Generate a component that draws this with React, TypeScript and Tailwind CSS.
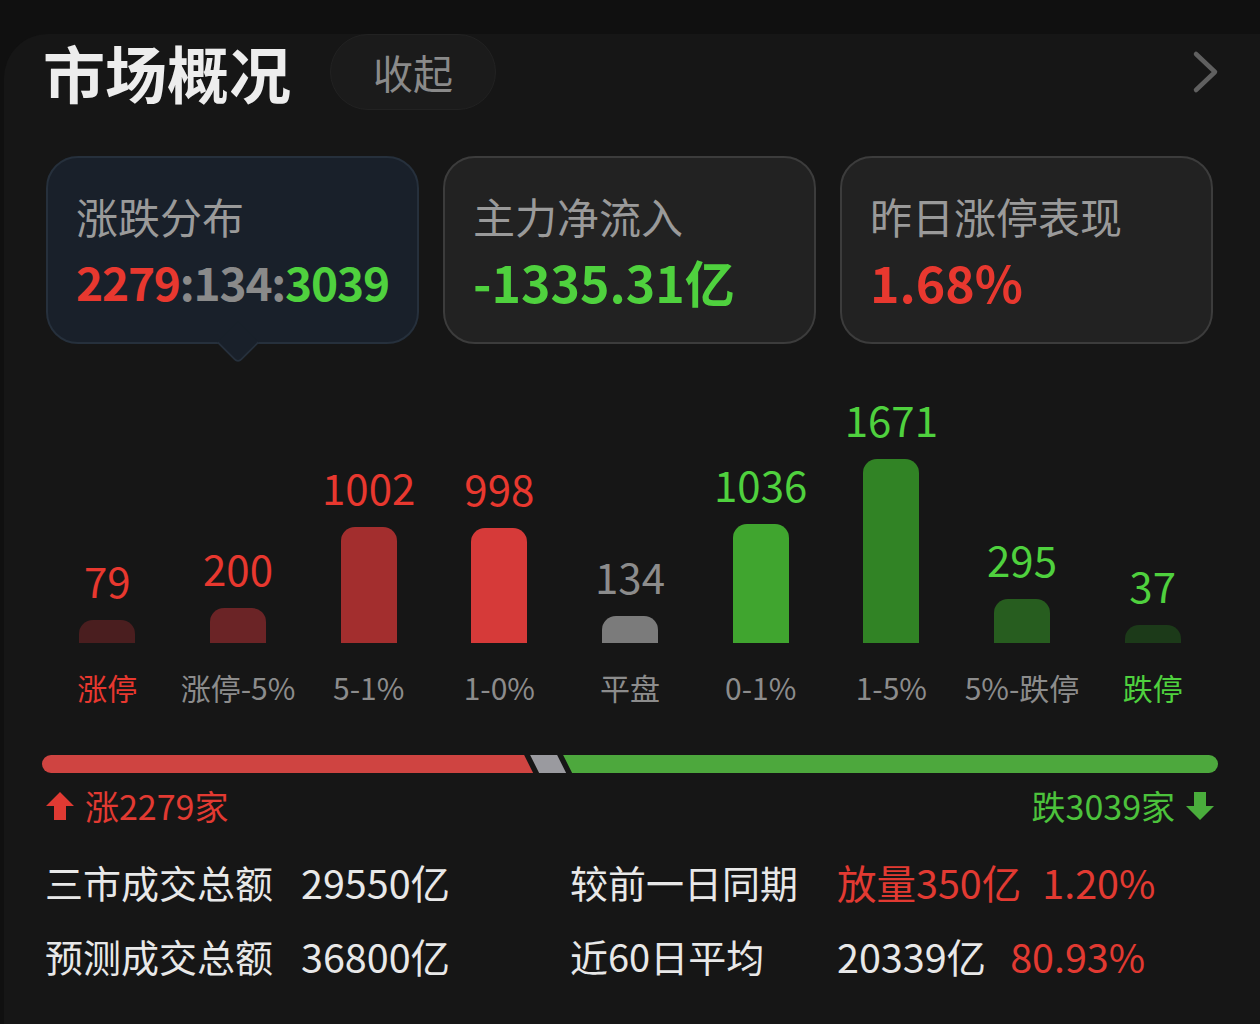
import React from 'react'

const bars = [
  { label: '涨停', value: 79, h: 23, bar: 'bg-[#4a1e1f]', num: 'text-[#e8382f]', lab: 'text-[#e8382f]' },
  { label: '涨停-5%', value: 200, h: 35, bar: 'bg-[#6b2426]', num: 'text-[#e8382f]', lab: 'text-[#8c8c8c]' },
  { label: '5-1%', value: 1002, h: 116, bar: 'bg-[#a32e2e]', num: 'text-[#e8382f]', lab: 'text-[#8c8c8c]' },
  { label: '1-0%', value: 998, h: 115, bar: 'bg-[#d63a39]', num: 'text-[#e8382f]', lab: 'text-[#8c8c8c]' },
  { label: '平盘', value: 134, h: 27, bar: 'bg-[#7b7b7b]', num: 'text-[#8c8c8c]', lab: 'text-[#8c8c8c]' },
  { label: '0-1%', value: 1036, h: 119, bar: 'bg-[#40a52f]', num: 'text-[#4fd13e]', lab: 'text-[#8c8c8c]' },
  { label: '1-5%', value: 1671, h: 184, bar: 'bg-[#318325]', num: 'text-[#4fd13e]', lab: 'text-[#8c8c8c]' },
  { label: '5%-跌停', value: 295, h: 44, bar: 'bg-[#275d1f]', num: 'text-[#4fd13e]', lab: 'text-[#8c8c8c]' },
  { label: '跌停', value: 37, h: 18, bar: 'bg-[#1c3a19]', num: 'text-[#4fd13e]', lab: 'text-[#4fd13e]' },
]

function StatCard({ title, children, active }: { title: string; children: React.ReactNode; active?: boolean }) {
  return (
    <div
      className={
        'relative h-[188px] rounded-[32px] border-2 pl-[28px] pt-[30px] ' +
        (active ? 'bg-[#19202a] border-[#26303c]' : 'bg-[#222222] border-[#3c3c3c]')
      }
    >
      <div className="text-[42px] leading-[56px] text-[#9a9a9a]">{title}</div>
      <div className="mt-[6px] h-[62px] flex items-center font-semibold">{children}</div>
      {active && (
        <div className="absolute left-[175px] bottom-[-16px] w-[30px] h-[30px] rotate-45 rounded-br-[6px] bg-[#19202a] border-r-2 border-b-2 border-[#26303c]" />
      )}
    </div>
  )
}

function ArrowUp({ color }: { color: string }) {
  return (
    <svg width="30" height="30" viewBox="0 0 30 30">
      <path d="M15 1 L29 15 L21 15 L21 29 L9 29 L9 15 L1 15 Z" fill={color} />
    </svg>
  )
}

function ArrowDown({ color }: { color: string }) {
  return (
    <svg width="30" height="30" viewBox="0 0 30 30">
      <path d="M15 29 L29 15 L21 15 L21 1 L9 1 L9 15 L1 15 Z" fill={color} />
    </svg>
  )
}

export default function App() {
  const up = 2279
  const down = 3039

  return (
    <div className="w-[1260px] h-[1024px] overflow-hidden bg-[#101010] font-['Noto_Sans_CJK_SC',sans-serif]">
      <div className="ml-[4px] mt-[6px] h-[1018px] rounded-tl-[44px] bg-[#161616] pl-[38px] pr-[42px]">
        {/* header */}
        <div className="flex items-center h-[76px] mt-[34px]">
          <div className="ml-[1px] text-[62px] leading-none font-bold text-[#ededed]">市场概况</div>
          <div className="ml-[39px] h-[76px] w-[166px] rounded-full bg-[#1b1b1b] border border-[#222] flex items-center justify-center text-[40px] text-[#8a8a8a]">
            收起
          </div>
          <div className="ml-auto -mr-[2px]">
            <svg width="28" height="44" viewBox="0 0 28 44">
              <path d="M4 4 L23 22 L4 40" fill="none" stroke="#606060" strokeWidth="4.5" strokeLinecap="round" strokeLinejoin="round" />
            </svg>
          </div>
        </div>

        {/* cards */}
        <div className="grid grid-cols-3 gap-[24px] ml-[4px] mr-[5px] mt-[46px]">
          <StatCard title="涨跌分布" active>
            <span className="text-[46px] tracking-[-1.2px]">
              <span className="text-[#e8382f]">2279</span>
              <span className="text-[#8a8a8a]">:134:</span>
              <span className="text-[#4fd13e]">3039</span>
            </span>
          </StatCard>
          <StatCard title="主力净流入">
            <span className="text-[50px] text-[#4fd13e]">-1335.31亿</span>
          </StatCard>
          <StatCard title="昨日涨停表现">
            <span className="text-[50px] text-[#e8382f]">1.68%</span>
          </StatCard>
        </div>

        {/* distribution bars */}
        <div className="grid grid-cols-9 mt-[40px]">
          {bars.map((b) => (
            <div key={b.label} className="flex flex-col items-center">
              <div className="h-[259px] flex flex-col items-center justify-end">
                <div className={'text-[42px] leading-[48px] mb-[16px] ' + b.num}>{b.value}</div>
                <div className={'w-[56px] rounded-t-[14px] ' + b.bar} style={{ height: b.h }} />
              </div>
              <div className={'mt-[26px] text-[30px] leading-[36px] ' + b.lab}>{b.label}</div>
            </div>
          ))}
        </div>

        {/* ratio bar */}
        <div className="flex h-[18px] mt-[50px]">
          <div
            className="h-full rounded-l-full bg-[#cf4441] [clip-path:polygon(0_0,calc(100%-9px)_0,100%_100%,0_100%)]"
            style={{ flexGrow: up }}
          />
          <div className="w-[36px] shrink-0 -ml-[3px] h-full bg-[#9a9a9f] [clip-path:polygon(0_0,calc(100%-9px)_0,100%_100%,9px_100%)]" />
          <div
            className="h-full -ml-[3px] rounded-r-full bg-[#4da83d] [clip-path:polygon(0_0,100%_0,100%_100%,9px_100%)]"
            style={{ flexGrow: down }}
          />
        </div>
        <div className="flex items-center justify-between mt-[13px]">
          <div className="flex items-center gap-[10px] ml-[3px]">
            <ArrowUp color="#e03a33" />
            <span className="text-[34px] leading-[40px] text-[#e23a32]">涨{up}家</span>
          </div>
          <div className="flex items-center gap-[10px] mr-[3px]">
            <span className="text-[34px] leading-[40px] text-[#4cc23c]">跌{down}家</span>
            <ArrowDown color="#4aad3c" />
          </div>
        </div>

        {/* totals */}
        <div className="mt-[30px] ml-[3px] grid grid-cols-[256px_269px_267px_auto] gap-y-[22px] text-[38px] leading-[52px] text-[#e8e8e8]">
          <div>三市成交总额</div>
          <div className="text-[39.5px]">29550亿</div>
          <div>较前一日同期</div>
          <div className="text-[39.5px] text-[#e23a32]">
            放量350亿<span className="ml-[21px]">1.20%</span>
          </div>
          <div>预测成交总额</div>
          <div className="text-[39.5px]">36800亿</div>
          <div>近60日平均</div>
          <div className="text-[39.5px]">
            20339亿<span className="ml-[24px] text-[#e23a32]">80.93%</span>
          </div>
        </div>
      </div>
    </div>
  )
}
